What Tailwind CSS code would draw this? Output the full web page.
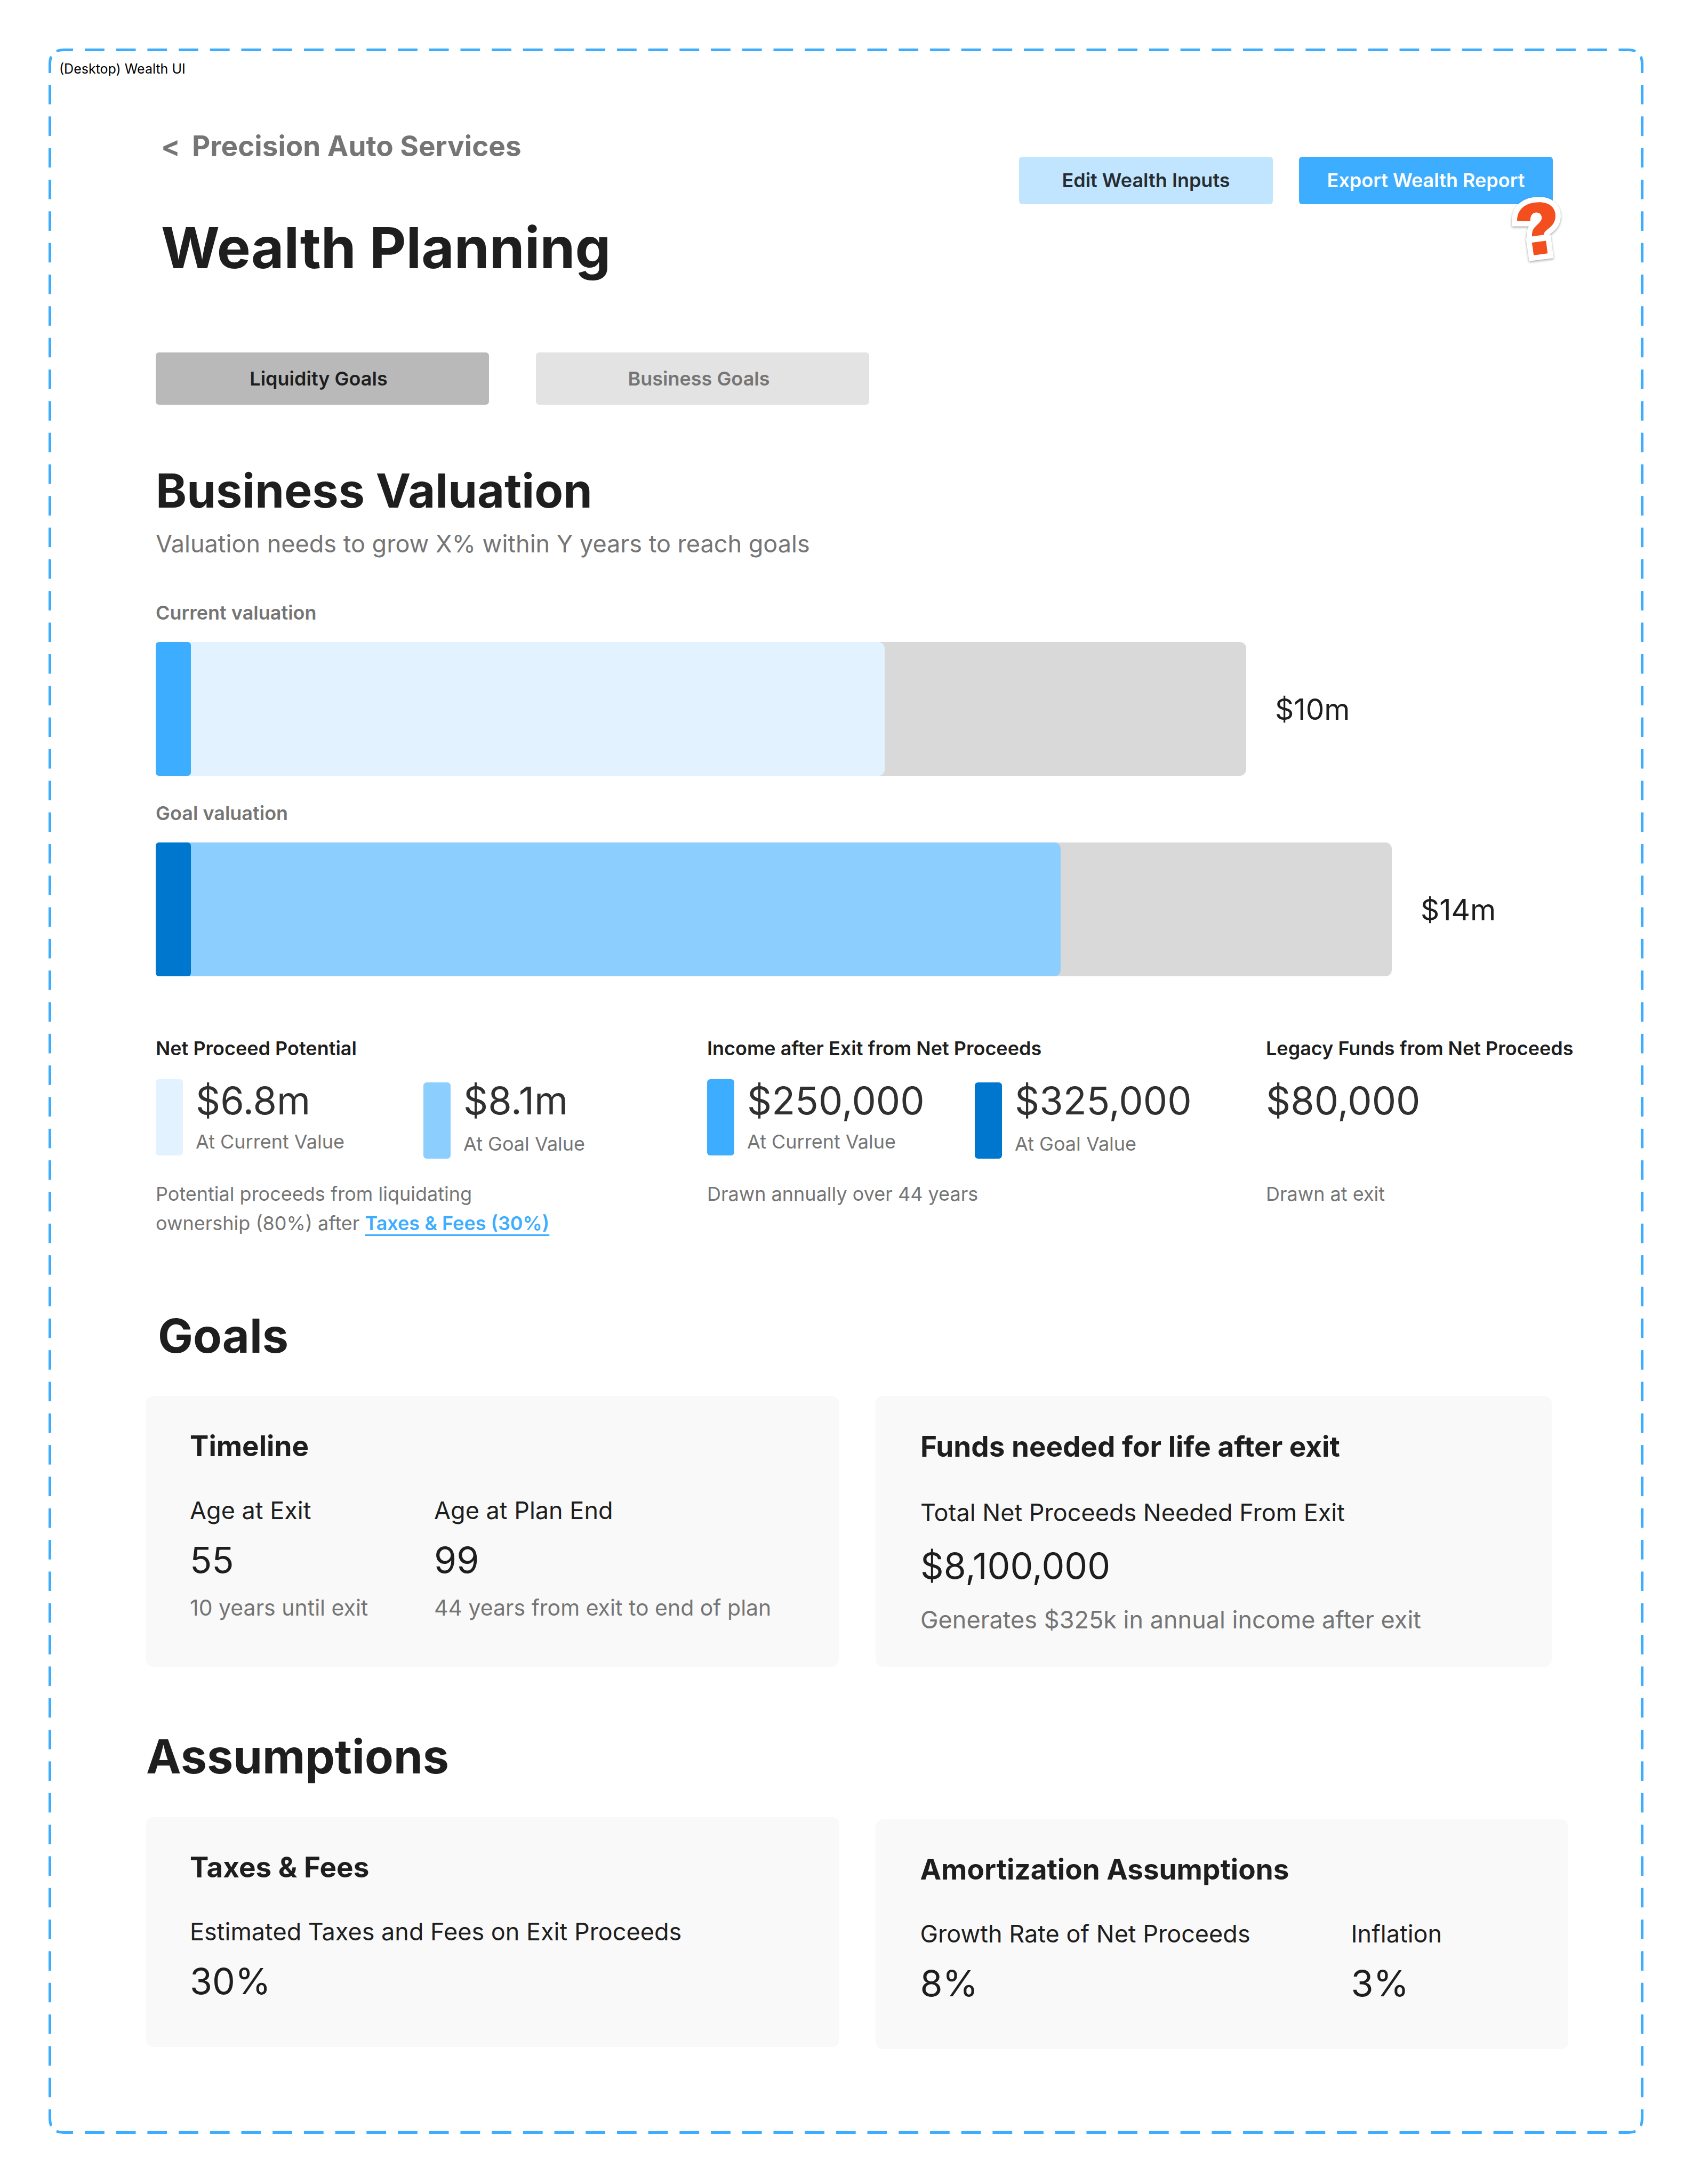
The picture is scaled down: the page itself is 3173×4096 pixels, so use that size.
<!DOCTYPE html>
<html lang="en">
<head>
    <meta charset="UTF-8">
    <meta name="viewport" content="width=device-width, initial-scale=1.0">
    <title>Wealth Planning</title>
    <script src="https://cdn.jsdelivr.net/npm/@tailwindcss/browser@4"></script>
</head>
<body class="bg-white p-[91px] font-['Inter',sans-serif] text-[#1e1e1e]">
    <div class="relative pt-[22px] pb-[159px]">

        <!-- Dashed frame: four sides, four corners -->
        <div class="absolute inset-0 pointer-events-none" aria-hidden="true">
            <div class="absolute top-0 left-[68px] right-[46px] h-[5px] bg-[linear-gradient(90deg,#3dadff_62%,transparent_62%)] bg-[length:59px_5px] bg-repeat-round"></div>
            <div class="absolute bottom-0 left-[68px] right-[46px] h-[5px] bg-[linear-gradient(90deg,#3dadff_62%,transparent_62%)] bg-[length:59px_5px] bg-repeat-round"></div>
            <div class="absolute left-0 top-[68px] bottom-[46px] w-[5px] bg-[linear-gradient(180deg,#3dadff_62%,transparent_62%)] bg-[length:5px_59px] bg-repeat-round"></div>
            <div class="absolute right-0 top-[68px] bottom-[46px] w-[5px] bg-[linear-gradient(180deg,#3dadff_62%,transparent_62%)] bg-[length:5px_59px] bg-repeat-round"></div>
            <svg class="absolute top-0 left-0 size-[46px]" viewBox="0 0 46 46" fill="none" stroke="#3dadff" stroke-width="5"><path d="M2.5 46V28Q2.5 21 5 15M15 5Q21 2.5 28 2.5H46"/></svg>
            <svg class="absolute top-0 right-0 size-[46px] rotate-90" viewBox="0 0 46 46" fill="none" stroke="#3dadff" stroke-width="5"><path d="M2.5 46V28Q2.5 21 5 15M15 5Q21 2.5 28 2.5H46"/></svg>
            <svg class="absolute bottom-0 right-0 size-[46px] rotate-180" viewBox="0 0 46 46" fill="none" stroke="#3dadff" stroke-width="5"><path d="M2.5 46V28Q2.5 21 5 15M15 5Q21 2.5 28 2.5H46"/></svg>
            <svg class="absolute bottom-0 left-0 size-[46px] -rotate-90" viewBox="0 0 46 46" fill="none" stroke="#3dadff" stroke-width="5"><path d="M2.5 46V28Q2.5 21 5 15M15 5Q21 2.5 28 2.5H46"/></svg>
        </div>

        <p class="pl-[20px] text-[25px] leading-[33px] text-black">(Desktop) Wealth UI</p>

        <div class="pl-[183px] pr-[141px]">

            <!-- Header -->
            <header class="mt-[95px] ml-[28px] mr-[29px] flex items-start justify-between">
                <div>
                    <a href="#" class="flex gap-[22px] text-[53px] leading-[66px] font-bold text-[#757575]"><span>&lt;</span><span>Precision Auto Services</span></a>
                    <h1 class="mt-[92px] text-[106px] leading-[132px] font-bold">Wealth Planning</h1>
                </div>
                <div class="mt-[53px] flex gap-[49px] text-[36px] leading-[55px] font-semibold">
                    <button type="button" class="w-[476px] h-[89px] rounded-[6px] bg-[#c2e5ff] text-[#252d32]">Edit Wealth Inputs</button>
                    <div class="relative">
                        <button type="button" class="w-[476px] h-[89px] rounded-[6px] bg-[#3dadff] text-white">Export Wealth Report</button>
                        <!-- Question sticker -->
                        <svg class="absolute top-[73px] right-[-18px] w-[97px] h-[127px] overflow-visible drop-shadow-[0_2px_2px_rgb(0_0_0/0.35)]" viewBox="160 80 290 380" aria-hidden="true">
                            <g stroke="#fff" stroke-width="60" fill="#fff">
                                <path d="M196 222C195 160 240 117 320 117C375 117 411 145 411 193C411 230 392 250 368 268C352 281 346 289 346 299L280 309C278 280 285 265 305 247C325 229 334 219 334 203C334 185 320 174 304 174C284 174 269 189 270 222Z"/>
                                <path d="M279 343L358 333L367 404L289 414Z"/>
                            </g>
                            <g fill="#f24e1e">
                                <path d="M196 222C195 160 240 117 320 117C375 117 411 145 411 193C411 230 392 250 368 268C352 281 346 289 346 299L280 309C278 280 285 265 305 247C325 229 334 219 334 203C334 185 320 174 304 174C284 174 269 189 270 222Z"/>
                                <path d="M279 343L358 333L367 404L289 414Z"/>
                            </g>
                        </svg>
                    </div>
                </div>
            </header>

            <!-- Tabs -->
            <nav class="mt-[130px] ml-[18px] flex gap-[88px] text-[36px] leading-[55px] font-semibold">
                <button type="button" class="w-[625px] h-[98px] pr-[14px] rounded-[6px] bg-[#b9b9b9]">Liquidity Goals</button>
                <button type="button" class="w-[625px] h-[98px] pr-[14px] rounded-[6px] bg-[#e3e3e3] text-[#757575]">Business Goals</button>
            </nav>

            <!-- Business Valuation -->
            <section class="mt-[106px] ml-[18px]">
                <h2 class="text-[88px] leading-[110px] font-bold">Business Valuation</h2>
                <p class="mt-[17px] text-[45px] leading-[56px] text-[#757575]">Valuation needs to grow X% within Y years to reach goals</p>

                <h3 class="mt-[74px] text-[36px] leading-[55px] font-semibold text-[#757575]">Current valuation</h3>
                <div class="mt-[27px] flex items-center gap-[54px]">
                    <div class="h-[251px] rounded-[12px] bg-[#d9d9d9]" style="width: 77.2%">
                        <div class="h-full rounded-[12px] bg-[#e2f3ff]" style="width: 66.85%">
                            <div class="w-[66px] h-full rounded-[6px] bg-[#3dadff]"></div>
                        </div>
                    </div>
                    <p class="text-[55px] leading-[66px]">$10m</p>
                </div>

                <h3 class="mt-[43px] text-[36px] leading-[55px] font-semibold text-[#757575]">Goal valuation</h3>
                <div class="mt-[27px] flex items-center gap-[54px]">
                    <div class="h-[251px] rounded-[12px] bg-[#d9d9d9]" style="width: 87.5%">
                        <div class="h-full rounded-[12px] bg-[#8ccfff]" style="width: 73.2%">
                            <div class="w-[66px] h-full rounded-[6px] bg-[#0077cf]"></div>
                        </div>
                    </div>
                    <p class="text-[55px] leading-[66px]">$14m</p>
                </div>

                <!-- Proceeds summary -->
                <div class="mt-[108px] grid grid-cols-[minmax(0,1034fr)_minmax(0,1048fr)_minmax(0,567fr)] text-[36px] leading-[55px] text-[#757575]">
                    <div>
                        <h3 class="font-semibold text-[#1e1e1e]">Net Proceed Potential</h3>
                        <div class="mt-[30px] flex">
                            <div class="w-[502px] flex gap-[24px]">
                                <div class="w-[51px] h-[143px] rounded-[6px] bg-[#e2f3ff]"></div>
                                <div>
                                    <p class="text-[72px] leading-[80px] text-[#303030]">$6.8m</p>
                                    <p class="mt-[10px]">At Current Value</p>
                                </div>
                            </div>
                            <div class="w-[502px] flex items-end gap-[24px]">
                                <div class="w-[51px] h-[143px] rounded-[6px] bg-[#8ccfff]"></div>
                                <div>
                                    <p class="text-[72px] leading-[80px] text-[#303030]">$8.1m</p>
                                    <p class="mt-[14px]">At Goal Value</p>
                                </div>
                            </div>
                        </div>
                        <p class="mt-[39px] max-w-[770px]">Potential proceeds from liquidating ownership (80%) after <a href="#taxes" class="font-semibold text-[#3dadff] underline decoration-[3px] underline-offset-[8px]">Taxes &amp; Fees (30%)</a></p>
                    </div>
                    <div>
                        <h3 class="font-semibold text-[#1e1e1e]">Income after Exit from Net Proceeds</h3>
                        <div class="mt-[30px] flex">
                            <div class="w-[502px] flex gap-[24px]">
                                <div class="w-[51px] h-[143px] rounded-[6px] bg-[#3dadff]"></div>
                                <div>
                                    <p class="text-[72px] leading-[80px] text-[#303030]">$250,000</p>
                                    <p class="mt-[10px]">At Current Value</p>
                                </div>
                            </div>
                            <div class="w-[502px] flex items-end gap-[24px]">
                                <div class="w-[51px] h-[143px] rounded-[6px] bg-[#0077cf]"></div>
                                <div>
                                    <p class="text-[72px] leading-[80px] text-[#303030]">$325,000</p>
                                    <p class="mt-[14px]">At Goal Value</p>
                                </div>
                            </div>
                        </div>
                        <p class="mt-[39px]">Drawn annually over 44 years</p>
                    </div>
                    <div class="whitespace-nowrap">
                        <h3 class="font-semibold text-[#1e1e1e]">Legacy Funds from Net Proceeds</h3>
                        <p class="mt-[30px] h-[149px] text-[72px] leading-[80px] text-[#303030]">$80,000</p>
                        <p class="mt-[39px]">Drawn at exit</p>
                    </div>
                </div>
            </section>

            <!-- Goals -->
            <section class="mt-[128px]">
                <h2 class="ml-[22px] text-[88px] leading-[110px] font-bold">Goals</h2>
                <div class="mt-[58px] mr-[31px] grid grid-cols-[1299fr_1268fr] gap-[69px]">
                    <div class="rounded-[14px] bg-[#f9f9f9] px-[82px] pt-[61px] pb-[86px]">
                        <h3 class="text-[53px] leading-[66px] font-bold">Timeline</h3>
                        <div class="mt-[60px] flex">
                            <div class="w-[458px]">
                                <p class="text-[45px] leading-[56px]">Age at Exit</p>
                                <p class="mt-[22px] text-[68px] leading-[84px]">55</p>
                                <p class="mt-[23px] text-[41px] leading-[50px] text-[#757575]">10 years until exit</p>
                            </div>
                            <div>
                                <p class="text-[45px] leading-[56px]">Age at Plan End</p>
                                <p class="mt-[22px] text-[68px] leading-[84px]">99</p>
                                <p class="mt-[23px] text-[41px] leading-[50px] text-[#757575]">44 years from exit to end of plan</p>
                            </div>
                        </div>
                    </div>
                    <div class="rounded-[14px] bg-[#f9f9f9] px-[84px] pt-[62px] pb-[60px]">
                        <h3 class="text-[53px] leading-[66px] font-bold">Funds needed for life after exit</h3>
                        <p class="mt-[63px] text-[45px] leading-[56px]">Total Net Proceeds Needed From Exit</p>
                        <p class="mt-[29px] text-[68px] leading-[84px]">$8,100,000</p>
                        <p class="mt-[32px] text-[45px] leading-[56px] text-[#757575]">Generates $325k in annual income after exit</p>
                    </div>
                </div>
            </section>

            <!-- Assumptions -->
            <section id="taxes" class="mt-[113px]">
                <h2 class="text-[88px] leading-[110px] font-bold">Assumptions</h2>
                <div class="mt-[59px] grid grid-cols-2 items-start gap-[68px]">
                    <div class="rounded-[14px] bg-[#f9f9f9] px-[82px] pt-[61px] pb-[82px]">
                        <h3 class="text-[53px] leading-[66px] font-bold">Taxes &amp; Fees</h3>
                        <p class="mt-[60px] text-[45px] leading-[56px]">Estimated Taxes and Fees on Exit Proceeds</p>
                        <p class="mt-[22px] text-[68px] leading-[84px]">30%</p>
                    </div>
                    <div class="mt-1 rounded-[14px] bg-[#f9f9f9] px-[84px] pt-[61px] pb-[82px]">
                        <h3 class="text-[53px] leading-[66px] font-bold">Amortization Assumptions</h3>
                        <div class="mt-[60px] flex">
                            <div class="w-[808px]">
                                <p class="text-[45px] leading-[56px]">Growth Rate of Net Proceeds</p>
                                <p class="mt-[22px] text-[68px] leading-[84px]">8%</p>
                            </div>
                            <div>
                                <p class="text-[45px] leading-[56px]">Inflation</p>
                                <p class="mt-[22px] text-[68px] leading-[84px]">3%</p>
                            </div>
                        </div>
                    </div>
                </div>
            </section>

        </div>
    </div>
</body>
</html>
